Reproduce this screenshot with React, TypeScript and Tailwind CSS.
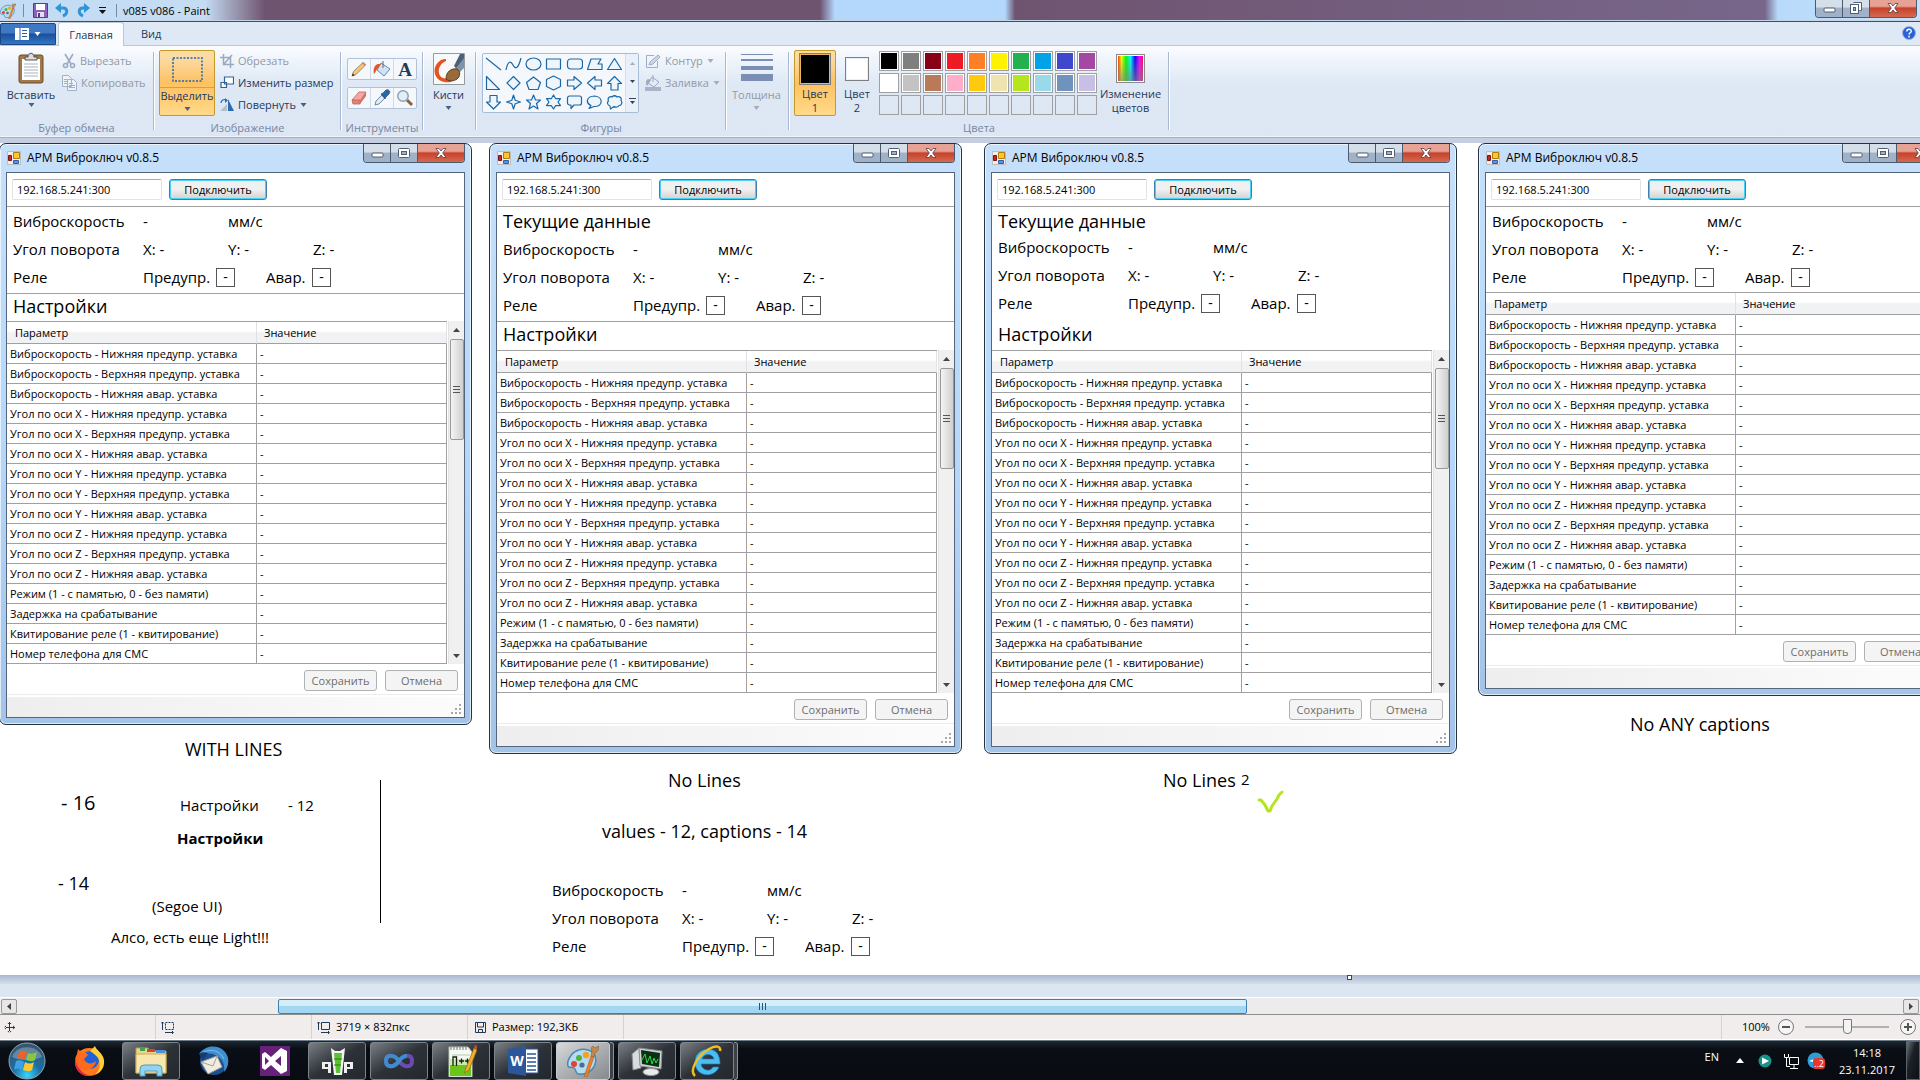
import type { ReactNode } from "react";

const ROWS = [
  "Виброскорость - Нижняя предупр. уставка",
  "Виброскорость - Верхняя предупр. уставка",
  "Виброскорость - Нижняя авар. уставка",
  "Угол по оси X - Нижняя предупр. уставка",
  "Угол по оси X - Верхняя предупр. уставка",
  "Угол по оси X - Нижняя авар. уставка",
  "Угол по оси Y - Нижняя предупр. уставка",
  "Угол по оси Y - Верхняя предупр. уставка",
  "Угол по оси Y - Нижняя авар. уставка",
  "Угол по оси Z - Нижняя предупр. уставка",
  "Угол по оси Z - Верхняя предупр. уставка",
  "Угол по оси Z - Нижняя авар. уставка",
  "Режим (1 - с памятью, 0 - без памяти)",
  "Задержка на срабатывание",
  "Квитирование реле (1 - квитирование)",
  "Номер телефона для СМС",
];

const PALETTE = [
  "bg-[#000000]", "bg-[#7f7f7f]", "bg-[#880015]", "bg-[#ed1c24]", "bg-[#ff7f27]",
  "bg-[#fff200]", "bg-[#22b14c]", "bg-[#00a2e8]", "bg-[#3f48cc]", "bg-[#a349a4]",
  "bg-[#ffffff]", "bg-[#c3c3c3]", "bg-[#b97a57]", "bg-[#ffaec9]", "bg-[#ffc90e]",
  "bg-[#efe4b0]", "bg-[#b5e61d]", "bg-[#99d9ea]", "bg-[#7092be]", "bg-[#c8bfe7]",
];

/* ---------- small drawings ---------- */

function Caret({ className = "text-[#4a5f86]" }: { className?: string }) {
  return (
    <svg width="7" height="4" viewBox="0 0 7 4" className={className}>
      <path d="M0.5 0h6L3.5 4z" fill="currentColor" />
    </svg>
  );
}

function PaletteIcon({ size = 16 }: { size?: number }) {
  return (
    <svg width={size} height={size} viewBox="0 0 32 32">
      <path d="M3 12C6 6 14 3 21 5c7 2 9 8 7 14-2 7-9 11-16 10-3 0-3-3-4-5-1-3-5 0-7-3-1-3 0-6 2-9z" fill="#b5dbf2" stroke="#4d86ad" strokeWidth="1.5" />
      <circle cx="7" cy="19" r="3" fill="#e2403a" />
      <circle cx="12" cy="13" r="3" fill="#52b043" />
      <circle cx="19" cy="10" r="3.2" fill="#f2a31f" />
      <circle cx="15" cy="20" r="2.6" fill="#4a6f8f" />
      <path d="M17 32l7-21 3 1-7 20z" fill="#e8822a" stroke="#b85d15" strokeWidth=".6" />
      <path d="M24 11l1-5c-1-2-1-4 1-5l2 2 4-2c0 4-2 6-4 7l-1 4z" fill="#c08a50" stroke="#8a5c2c" strokeWidth=".6" />
    </svg>
  );
}

function FormIcon() {
  return (
    <svg width="14" height="14" viewBox="0 0 14 14">
      <path d="M.5.5h13v13H.5z" fill="#eee" stroke="#bdbdbd" />
      <path d="M1.5 4.5h3v5h-3z" fill="#c22" stroke="#7d1414" />
      <path d="M6.500 1.500h6v6h-6z" fill="#fbc72d" stroke="#b07d08" />
      <path d="M6.500 9.500h5v3h-5z" fill="#5b93e8" stroke="#2f5fb3" />
    </svg>
  );
}

function CaptionButtons({ restore = false }: { restore?: boolean }) {
  return (
    <div className="flex h-[19px] shrink-0 overflow-hidden rounded-b-[4px] border border-t-0 border-[#4c5a6c]">
      <button aria-label="Свернуть" className="flex w-[27px] items-center justify-center border-r border-[#4c5a6c] bg-linear-to-b from-[#d5dfea] from-45% to-[#9fb2c8] to-50%">
        <svg width="13" height="6" viewBox="0 0 13 6" className="mt-1"><rect x="1" y="1" width="11" height="4" rx="1" fill="#fff" stroke="#555d70" /></svg>
      </button>
      <button aria-label="Развернуть" className="flex w-[27px] items-center justify-center border-r border-[#4c5a6c] bg-linear-to-b from-[#d5dfea] from-45% to-[#9fb2c8] to-50%">
        {restore ? (
          <svg width="12" height="12" viewBox="0 0 12 12" fill="none" stroke="#555d70"><path d="M3.500.5h8v8h-2" fill="#fff" /><rect x=".5" y="2.500" width="8" height="9" fill="#fff" /><rect x="3.500" y="5.500" width="2" height="3" fill="#9fb2c8" /></svg>
        ) : (
          <svg width="12" height="10" viewBox="0 0 12 10" fill="none" stroke="#555d70"><rect x=".5" y=".5" width="11" height="9" rx="1" fill="#fff" /><rect x="3.500" y="3.500" width="5" height="3" fill="#9fb2c8" /></svg>
        )}
      </button>
      <button aria-label="Закрыть" className="flex w-[46px] items-center justify-center bg-linear-to-b from-[#e5a295] from-40% via-[#c8402b] via-50% to-[#d4694f]">
        <svg width="12" height="10" viewBox="0 0 12 10"><path d="M1 .5h3l2 2.500L8 .5h3L7.700 5 11 9.500H8L6 7 4 9.500H1L4.300 5z" fill="#fff" stroke="#5b3a44" strokeWidth=".8" /></svg>
      </button>
    </div>
  );
}

/* ---------- application window drawn on the canvas ---------- */

function Heading({ children, className }: { children: ReactNode; className: string }) {
  return <h2 className={`pl-[6px] text-[18px] leading-[24px] ${className}`}>{children}</h2>;
}

function Flag() {
  return <span className="flex size-[19px] items-center justify-center border border-[#555] text-[14px] leading-none">-</span>;
}

function Readings() {
  return (
    <div className="pl-[6px] text-[15px] leading-[28px]">
      <div className="grid h-7 grid-cols-[130px_85px_85px]"><span>Виброскорость</span><span>-</span><span>мм/с</span></div>
      <div className="grid h-7 grid-cols-[130px_85px_85px]"><span>Угол поворота</span><span>X: -</span><span>Y: -</span><span className="col-start-4">Z: -</span></div>
      <div className="grid h-7 grid-cols-[130px_73px_50px_46px_auto] items-center justify-start"><span>Реле</span><span>Предупр.</span><Flag /><span>Авар.</span><Flag /></div>
    </div>
  );
}

function ScrollColumn() {
  return (
    <div className="ml-px flex w-[16px] flex-col items-center border-l border-[#e3e3e3] bg-[#f0f0f0]">
      <div className="flex h-[18px] items-center"><svg width="7" height="4" viewBox="0 0 7 4"><path d="M0 4h7L3.500 0z" fill="#444" /></svg></div>
      <div className="flex h-[101px] w-[14px] flex-col items-center justify-center gap-[2px] rounded-[2px] border border-[#999] bg-linear-to-r from-[#f4f4f4] to-[#cfcfcf]">
        <i className="h-px w-[7px] bg-[#555]" /><i className="h-px w-[7px] bg-[#555]" /><i className="h-px w-[7px] bg-[#555]" />
      </div>
      <div className="mt-auto flex h-[17px] items-center"><svg width="7" height="4" viewBox="0 0 7 4"><path d="M0 0h7L3.500 4z" fill="#444" /></svg></div>
    </div>
  );
}

function AppWindow({ id, place, variant }: { id: string; place: string; variant: "lines" | "nolines" | "nolines2" | "bare" }) {
  return (
    <section className={`absolute top-0 w-[473px] rounded-[7px] border border-[#28323f] bg-linear-to-b from-[#c6e0fa] via-[#b5d8fb] to-[#a3c3e8] px-[6px] pb-[6px] shadow-[inset_0_0_0_1px_rgba(255,255,255,0.65)] ${place}`}>
      <header className="flex h-[28px] items-start">
        <div className="flex h-[28px] flex-1 items-center gap-[6px] pl-[1px]">
          <FormIcon />
          <span className="text-[12px] leading-4">АРМ Виброключ v0.8.5</span>
        </div>
        <CaptionButtons />
      </header>
      <div className="border border-[#55657a] bg-white">
        <div className="flex h-[34px] items-center gap-[7px] border-b border-[#a0a0a0] pl-[5px]">
          <input aria-label="Адрес" id={`addr-${id}`} defaultValue="192.168.5.241:300" className="h-[21px] w-[150px] rounded-[2px] border border-[#e2e3ea] border-t-[#abadb3] px-[4px] text-[11px]" />
          <button className="h-[21px] w-[98px] rounded-[3px] border border-[#3c7fb1] bg-linear-to-b from-[#f0f0f0] from-50% to-[#d2d2d2] text-[11px] leading-none shadow-[inset_0_0_0_1px_#48d0f7]">Подключить</button>
        </div>
        {variant === "lines" && (
          <>
            <div className="border-b border-[#a0a0a0] pb-[2px]"><Readings /></div>
            <Heading className="h-[27px]">Настройки</Heading>
          </>
        )}
        {variant === "nolines" && (
          <>
            <Heading className="h-[28px] pt-[2px]">Текущие данные</Heading>
            <div className="border-b border-[#a0a0a0] pb-[2px]"><Readings /></div>
            <Heading className="h-[28px]">Настройки</Heading>
          </>
        )}
        {variant === "nolines2" && (
          <>
            <Heading className="h-[26px] pt-[2px]">Текущие данные</Heading>
            <Readings />
            <Heading className="h-[33px] pt-[5px]">Настройки</Heading>
          </>
        )}
        {variant === "bare" && <div className="pb-px"><Readings /></div>}
        <div className="flex">
          <div className="flex-1">
            <table className="w-full table-fixed border-separate border-spacing-0 border-t border-[#a0a0a0] text-left text-[11px] leading-[16px]">
              <thead>
                <tr className="h-[22px] bg-linear-to-b from-white from-40% to-[#f1f2f4] to-50%">
                  <th className="w-[250px] border-r border-b border-r-[#e0e2e5] border-b-[#a0a0a0] p-0 pl-[8px] font-normal">Параметр</th>
                  <th className="border-r border-b border-r-[#e0e2e5] border-b-[#a0a0a0] p-0 pl-[7px] font-normal">Значение</th>
                </tr>
              </thead>
              <tbody>
                {ROWS.map((r) => (
                  <tr key={r} className="h-[20px]">
                    <td className="border-r border-b border-[#a0a0a0] p-0 pl-[3px] whitespace-nowrap">{r}</td>
                    <td className="border-r border-b border-[#a0a0a0] p-0 pl-[3px]">-</td>
                  </tr>
                ))}
              </tbody>
            </table>
          </div>
          {variant !== "bare" && <ScrollColumn />}
        </div>
        <div className="flex justify-end gap-[8px] px-[6px] pt-[6px] pb-[3px]">
          <button disabled className="h-[21px] w-[73px] rounded-[3px] border border-[#adb2b5] bg-[#f4f4f4] text-[11px] leading-none text-[#6d6d6d]">Сохранить</button>
          <button disabled className="h-[21px] w-[73px] rounded-[3px] border border-[#adb2b5] bg-[#f4f4f4] text-[11px] leading-none text-[#6d6d6d]">Отмена</button>
        </div>
        <div className="flex h-[23px] items-end justify-end border-t border-[#ececec] bg-linear-to-r from-[#eeeeee] to-[#fcfcfc] p-[3px] shadow-[inset_0_2px_0_#fff]">
          <svg width="10" height="10" viewBox="0 0 10 10" fill="#a8a8a8"><path d="M8 0h2v2H8zM4 4h2v2H4zM8 4h2v2H8zM0 8h2v2H0zM4 8h2v2H4zM8 8h2v2H8z" /></svg>
        </div>
      </div>
    </section>
  );
}

/* ---------- ribbon ---------- */

function Group({ label, className, children }: { label?: string; className: string; children: ReactNode }) {
  return (
    <div className={`flex h-full shrink-0 items-stretch ${className}`}>
      <div className="flex min-w-0 flex-1 flex-col">
        <div className="flex flex-1 items-start">{children}</div>
        <div className="h-[17px] text-center leading-4 text-[#7886a0]">{label}</div>
      </div>
      <i className="mt-[6px] mb-[7px] w-[2px] border-r border-white bg-[#a9b9d2]" />
    </div>
  );
}

const s = { fill: "#eef5fb", stroke: "#1c68a6", strokeWidth: 1.2, strokeLinejoin: "round" as const };
const SHAPES: [string, ReactNode][] = [
  ["Линия", <path d="M1 2l15 12" {...s} />],
  ["Кривая", <path d="M1 14C3 4 6 5 8 9s5 5 8-7" {...s} fill="none" />],
  ["Овал", <ellipse cx="8.500" cy="8" rx="7.500" ry="6" {...s} />],
  ["Прямоугольник", <path d="M1.500 3h14v10h-14z" {...s} />],
  ["Скругленный прямоугольник", <rect x="1.500" y="3" width="15" height="10" rx="3" {...s} />],
  ["Многоугольник", <path d="M1.500 13.500L5 3h10l-3 5h4v5.500z" {...s} />],
  ["Треугольник", <path d="M8.500 2.500l7 11h-14z" {...s} />],
  ["Прямоугольный треугольник", <path d="M1.500 1.500v13h13z" {...s} />],
  ["Ромб", <path d="M8.500 1.500l6.500 6.500-6.500 6.500L2 8z" {...s} />],
  ["Пятиугольник", <path d="M8.500 2l7 5.500-2.500 7h-9l-2.500-7z" {...s} />],
  ["Шестиугольник", <path d="M8.500 1l7 3.500v7l-7 3.500-7-3.500v-7z" {...s} />],
  ["Стрелка вправо", <path d="M1.500 5H8V1.500L15.500 8 8 14.500V11H1.500z" {...s} />],
  ["Стрелка влево", <path d="M15.500 5H9V1.500L1.500 8 9 14.500V11h6.500z" {...s} />],
  ["Стрелка вверх", <path d="M5 15V8.500H1.500l7-7 7 7H12V15z" {...s} />],
  ["Стрелка вниз", <path d="M5 1.500V8H1.500l7 7 7-7H12V1.500z" {...s} />],
  ["Звезда 4", <path d="M8.500 1l1.700 5.300L15.500 8l-5.300 1.700L8.500 15l-1.700-5.300L1.500 8l5.300-1.700z" {...s} />],
  ["Звезда 5", <path d="M8.500 1l2 5h5l-4 3.500 1.500 5.500-4.500-3-4.500 3 1.500-5.500-4-3.500h5z" {...s} />],
  ["Звезда 6", <path d="M8.500 1l2.200 3.700h4.800L13 8l2.500 3.600h-4.800L8.500 15l-2.200-3.400H1.500L4 8 1.500 4.700h4.800z" {...s} />],
  ["Выноска", <path d="M3.500 2h10a2 2 0 012 2v5a2 2 0 01-2 2H8l-3 3.500V11H3.500a2 2 0 01-2-2V4a2 2 0 012-2z" {...s} />],
  ["Овальная выноска", <path d="M5 11.500L3 14.500l5-2c9 .5 10-9.500.5-10.500C0 2.500-.5 9 5 11.500z" {...s} />],
  ["Облако", <path d="M4 12c-3-1-3-4-1.500-5C1 4 4 2 6 3c2-2 4-1 5 0 3-1 5 1 4 3.500 2 2.500 0 5-2 5-1 2-4 2-5 1L4.500 15z" {...s} />],
];

function ToolButton({ label, children }: { label: string; children: ReactNode }) {
  return (
    <button aria-label={label} className="flex flex-1 items-center justify-center border-r border-[#cfdaea] last:border-r-0">
      <svg width="18" height="18" viewBox="0 0 18 18">{children}</svg>
    </button>
  );
}

function Ribbon() {
  return (
    <div className="flex h-[92px] shrink-0 border-b border-[#a3b1c8] bg-linear-to-b from-[#fafcff] via-[#dfe9f5] via-40% to-[#dce6f4] text-[11px] leading-4 text-[#1e395b] shadow-[inset_0_-1px_0_#eef4fb]">
      <Group label="Буфер обмена" className="w-[155px]">
        <button className="flex w-[62px] flex-col items-center pt-[6px]">
          <svg width="26" height="32" viewBox="0 0 26 32">
            <rect x="1" y="3" width="24" height="28" rx="2" fill="#a3794b" stroke="#6e4b26" />
            <path d="M4 7h18v21H4z" fill="#fff" />
            <path d="M6 12h14M6 15h14M6 18h14M6 21h14M6 24h14" stroke="#a9b3bd" />
            <path d="M7 8V5h3c0-5 6-5 6 0h3v3z" fill="#d9dcdf" stroke="#555" />
          </svg>
          <span className="mt-[3px]">Вставить</span>
          <Caret />
        </button>
        <div className="flex flex-col pt-[4px] text-[#9299a6]">
          <button disabled className="flex h-[22px] items-center gap-[4px]">
            <svg width="14" height="16" viewBox="0 0 14 16" fill="none" stroke="#9aaac4" strokeWidth="1.600"><path d="M3 1l6 10M11 1L5 11" /><circle cx="3.500" cy="12.500" r="2" /><circle cx="10.500" cy="12.500" r="2" /></svg>
            Вырезать
          </button>
          <button disabled className="flex h-[22px] items-center gap-[4px]">
            <svg width="15" height="16" viewBox="0 0 15 16" fill="#eef3f9" stroke="#a3b1c8"><path d="M.5.5h6l3 3v8h-9zM5.500 4.500h6l3 3v8h-9z" /><path d="M7 8.500h4M7 10.500h6M7 12.500h6M2 4.500h3M2 6.500h3M2 8.500h3" /></svg>
            Копировать
          </button>
        </div>
      </Group>

      <Group label="Изображение" className="w-[187px]">
        <button className="mt-[4px] ml-[4px] flex h-[66px] w-[56px] shrink-0 flex-col items-center rounded-[2px] border border-[#c29b29] bg-linear-to-b from-[#fbdba4] from-10% via-[#fdc160] via-50% to-[#ffd98a]">
          <span className="flex h-[37px] w-full items-center justify-center border-b border-[#d1a23d]">
            <svg width="31" height="25" viewBox="0 0 31 25"><path d="M1 1h29v23H1z" fill="none" stroke="#2464a6" strokeWidth="1.500" strokeDasharray="2 1.500" /></svg>
          </span>
          <span>Выделить</span>
          <span className="flex h-[10px] items-center"><Caret /></span>
        </button>
        <div className="flex flex-col pt-[4px] pl-[5px]">
          <button disabled className="flex h-[22px] items-center gap-[4px] text-[#9299a6]">
            <svg width="14" height="14" viewBox="0 0 14 14" fill="none" stroke="#9aa9c0" strokeWidth="1.500"><path d="M3.500 0v10.500H14M0 3.500h10.500V14M4 10l8-9" /></svg>
            Обрезать
          </button>
          <button className="flex h-[22px] items-center gap-[4px] whitespace-nowrap">
            <svg width="14" height="14" viewBox="0 0 14 14" fill="#fff" stroke="#2c6496" strokeWidth="1.200"><path d="M4.500 1h9v7h-9zM1 6.500h5.500v5H1z" /></svg>
            Изменить размер
          </button>
          <button className="flex h-[22px] items-center gap-[4px]">
            <svg width="14" height="14" viewBox="0 0 14 14"><path d="M0 13L7 6v7z" fill="#b6bec9" /><path d="M8 13V1l6 12z" fill="#2a6eaf" /><path d="M1 5c0-3 3-4 5-3" fill="none" stroke="#2a6eaf" strokeWidth="1.300" /><path d="M5 0l3 2.500L5 5z" fill="#2a6eaf" /></svg>
            Повернуть <Caret />
          </button>
        </div>
      </Group>

      <Group label="Инструменты" className="w-[82px]">
        <div className="flex flex-1 flex-col gap-[7px] px-[5px] pt-[12px]">
          <div className="flex h-[22px] rounded-[2px] border border-[#b2c2da] bg-[#f4f8fd]">
            <ToolButton label="Карандаш"><path d="M2 16l1.500-4.500L13 2.500 15.500 5 6 14.500z" fill="#f4c876" stroke="#7a6242" strokeWidth=".7" /><path d="M12 3.500l1.500-1.500 2.500 2.500-1.500 1.500z" fill="#e0807a" /><path d="M2 16l.8-2.500 1.700 1.700z" fill="#222" /></ToolButton>
            <ToolButton label="Заливка"><path d="M8 3l9 6-6 7-7-6z" fill="#cfe3f2" stroke="#4a7fa9" strokeWidth=".9" /><path d="M5 4C1 5 0 10 1 14c2-2 2-4 4-6l3-4z" fill="#e2562c" /><path d="M10 8V1" stroke="#666" /></ToolButton>
            <ToolButton label="Текст"><text x="9" y="16" textAnchor="middle" fontFamily="Liberation Serif, serif" fontWeight="700" fontSize="19" fill="#1f3b57">A</text></ToolButton>
          </div>
          <div className="flex h-[22px] rounded-[2px] border border-[#b2c2da] bg-[#f4f8fd]">
            <ToolButton label="Ластик"><path d="M2 11L9 3h7l-6 9z" fill="#f3a9a2" stroke="#c0635c" strokeWidth=".8" /><path d="M2 11h8v4H3z" fill="#e68078" stroke="#c0635c" strokeWidth=".8" /><path d="M10 12l6-9v4l-6 8z" fill="#d66e66" /></ToolButton>
            <ToolButton label="Палитра"><path d="M2 16l1-4 6-6 3 3-6 6z" fill="#dcebf7" stroke="#56718c" strokeWidth=".8" /><path d="M8 5l2-1 3-3c3-1 5 2 3 4l-3 3-1 2z" fill="#2768a8" stroke="#173f6b" strokeWidth=".6" /></ToolButton>
            <ToolButton label="Масштаб"><path d="M11 11l5 5" stroke="#8a6440" strokeWidth="3" /><circle cx="7" cy="7" r="5.200" fill="#dff0fa" stroke="#8fa0b0" strokeWidth="1.500" /></ToolButton>
          </div>
        </div>
      </Group>

      <Group className="w-[53px]">
        <button className="flex flex-1 flex-col items-center pt-[7px] pr-[2px]">
          <svg width="32" height="32" viewBox="0 0 32 32">
            <path d="M.5.5h31v31H.5z" fill="#f7f9fa" stroke="#9a9a9a" />
            <path d="M13 6C5 6 0 14 2 21c2 7 9 9 16 8l2-5c-6 3-13 2-14-4-1-5 2-10 7-12z" fill="#e4531f" />
            <path d="M22 14L31 3v12l-5 5z" fill="#7d93a9" /><path d="M27 1l4 0v4l-8 10-2-2z" fill="#4b5f78" /><path d="M13 26c0-7 5-11 11-10 4 2 3 8 0 10s-7 3-11 0z" fill="#9a6b3a" stroke="#5c3c1b" />
          </svg>
          <span className="mt-[2px]">Кисти</span>
          <span className="flex h-[10px] items-center"><Caret /></span>
        </button>
      </Group>

      <Group label="Фигуры" className="w-[250px]">
        <div className="mt-[7px] ml-[5px] flex h-[60px] w-[157px] shrink-0 rounded-[2px] border border-[#a9bcd6] bg-[#f4f8fd]">
          <div className="grid w-[142px] grid-cols-7 grid-rows-3 place-items-center">
            {SHAPES.map(([n, d]) => (
              <button key={n} aria-label={n}><svg width="17" height="16" viewBox="0 0 17 16">{d}</svg></button>
            ))}
          </div>
          <div className="flex flex-1 flex-col items-center justify-around border-l border-[#d5dfec] bg-[#e9f0f9]">
            <svg width="5" height="3" viewBox="0 0 5 3"><path d="M0 3h5L2.500 0z" fill="#a5adba" /></svg>
            <svg width="5" height="3" viewBox="0 0 5 3"><path d="M0 0h5L2.500 3z" fill="#33435c" /></svg>
            <svg width="7" height="6" viewBox="0 0 7 6"><path d="M0 0h7v1H0zM1 3h5L3.500 6z" fill="#33435c" /></svg>
          </div>
        </div>
        <div className="flex flex-col pt-[4px] pl-[6px] text-[#9299a6]">
          <button disabled className="flex h-[22px] items-center gap-[4px]">
            <svg width="16" height="15" viewBox="0 0 16 15" fill="none" stroke="#a0aec5"><path d="M9 1.500H1.500v12h11V7" /><path d="M4 11l1-3 8-7 2 2-7 7z" fill="#ccd6e5" /></svg>
            Контур <Caret className="text-[#a3adbe]" />
          </button>
          <button disabled className="flex h-[22px] items-center gap-[4px]">
            <svg width="16" height="16" viewBox="0 0 16 16"><path d="M0 12h16v4H0z" fill="#a7b4ca" /><path d="M7 2l7 5-5 5-6-4z" fill="#e4ebf4" stroke="#9aa9c0" /><path d="M3 4C0 6 1 9 2 11l4-6z" fill="#9aa9c0" /><path d="M8 7V0" stroke="#9aa9c0" /></svg>
            Заливка <Caret className="text-[#a3adbe]" />
          </button>
        </div>
      </Group>

      <Group className="w-[63px]">
        <button disabled className="flex flex-1 flex-col items-center pt-[8px] pr-[2px] text-[#9299a6]">
          <svg width="32" height="28" viewBox="0 0 32 28" fill="#7a8fb3"><path d="M0 0h32v1H0zM0 5h32v2H0zM0 12h32v4H0zM0 20h32v7H0z" /></svg>
          <span className="mt-[5px]">Толщина</span>
          <span className="flex h-[10px] items-center"><Caret className="text-[#a3adbe]" /></span>
        </button>
      </Group>

      <Group label="Цвета" className="w-[380px]">
        <button className="mt-[4px] ml-[4px] flex h-[66px] w-[42px] shrink-0 flex-col items-center rounded-[2px] border border-[#c29b29] bg-linear-to-b from-[#fbdba4] from-10% via-[#fdc160] via-50% to-[#ffd98a] pt-[2px]">
          <i className="size-[32px] shrink-0 border border-[#7f7f7f] bg-black shadow-[inset_0_0_0_1px_#e8b860]" />
          <span className="mt-[2px] leading-[14px]">Цвет<br />1</span>
        </button>
        <button className="mt-[11px] ml-[1px] flex w-[40px] shrink-0 flex-col items-center">
          <i className="size-[24px] border border-[#7f7f7f] bg-white shadow-[inset_0_0_0_1px_#e8f0f8]" />
          <span className="mt-[6px] leading-[14px]">Цвет<br />2</span>
        </button>
        <div className="mt-[5px] ml-[2px] grid shrink-0 grid-cols-10 gap-[2px]">
          {PALETTE.map((c) => (
            <button key={c} aria-label="Цвет палитры" className={`size-[20px] border border-[#a0a0a0] shadow-[inset_0_0_0_1px_#fff] ${c}`} />
          ))}
          {Array.from({ length: 10 }, (_, i) => (
            <button key={i} aria-label="Пустая ячейка" className="size-[20px] border border-[#a0a0a0]" />
          ))}
        </div>
        <button className="mt-[8px] flex flex-1 flex-col items-center pr-[4px]">
          <i className="size-[29px] border border-[#8a8a8a] bg-[linear-gradient(to_bottom,transparent,rgba(128,128,128,0.7)),linear-gradient(to_right,#f00,#ff0,#0f0,#0ff,#00f,#f0f,#f04)] shadow-[inset_0_0_0_1px_#fff]" />
          <span className="mt-[4px] leading-[14px]">Изменение<br />цветов</span>
        </button>
      </Group>
    </div>
  );
}

/* ---------- task bar ---------- */

function Task({ label, open, active, stacked, children }: { label: string; open?: boolean; active?: boolean; stacked?: boolean; children: ReactNode }) {
  const icon = <svg width="32" height="32" viewBox="0 0 32 32">{children}</svg>;
  const look = active
    ? "border border-[#c6cbd0] bg-linear-to-br from-[#d7d9da] to-[#84898d]"
    : open
      ? "border border-[#7d8488] bg-linear-to-br from-[#7b8186] via-[#2c3237] via-50% to-[#22282d]"
      : "";
  return (
    <div className="flex h-[38px] w-[58px]">
      <button aria-label={label} className={`flex h-full flex-1 items-center justify-center rounded-[3px] ${look}`}>{icon}</button>
      {stacked && <i className="h-full w-[4px] rounded-r-[3px] border border-l-0 border-[#8b9297] bg-[#3b4146]" />}
    </div>
  );
}

function Taskbar() {
  return (
    <nav className="flex h-[40px] shrink-0 items-center border-t border-[#6d7c88] bg-linear-to-b from-[#1c2831] via-[#0a0f15] via-20% to-[#080b11] text-white">
      <button aria-label="Пуск" className="flex w-[60px] justify-center pr-[6px]">
        <svg width="38" height="38" viewBox="0 0 38 38">
          <defs>
            <radialGradient id="orb" cx="50%" cy="90%" r="85%"><stop offset="0" stopColor="#38d6fb" /><stop offset=".45" stopColor="#1b6fa5" /><stop offset="1" stopColor="#37566f" /></radialGradient>
          </defs>
          <circle cx="19" cy="19" r="18" fill="url(#orb)" stroke="#8aa7bb" />
          <path d="M4 15C8 2 30 2 34 15c-8 4-22 4-30 0z" fill="#fff" opacity=".25" />
          <path d="M11 10c3-2 5-1 8 0l-2 8c-3-2-5-2-8-1z" fill="#f0602a" />
          <path d="M20 11c3 1 5 1 9-1l-2 8c-3 2-6 1-9 0z" fill="#8cc63e" />
          <path d="M8 19c3-1 5-1 8 1l-2 8c-3-2-5-2-8 0z" fill="#3fa2e4" />
          <path d="M17 20c3 2 6 2 9 0l-2 8c-3 2-6 1-9 0z" fill="#fdc82f" />
        </svg>
      </button>
      <div className="flex flex-1 gap-[4px]">
        <Task label="Firefox">
          <circle cx="16" cy="17" r="14" fill="#ff7a1a" /><path d="M3 11C-1 25 9 32 18 31 8 29 3 21 3 11z" fill="#e6254c" /><circle cx="17" cy="15" r="9" fill="#2060d8" />
          <path d="M4 9l1-5 4 4c3-1 5 0 6 2l-4 4c2 5 8 6 12 2-1 8-11 12-17 7-3-3-4-9-2-14z" fill="#ff6a1c" />
          <path d="M17 6L22 1c1 4 8 7 9 14 1 8-4 13-9 15 5-5 6-12 3-17-2-3-5-5-8-7z" fill="#ffd033" />
        </Task>
        <Task label="Проводник" open>
          <path d="M1 3h12l1 3h17v22H1z" fill="#ecd48a" stroke="#b99b45" /><path d="M5 2h5v4H5z" fill="#3aa455" /><path d="M12 4h8v3h-8z" fill="#d8432f" /><path d="M21 5h9v3h-9z" fill="#4f8fd6" />
          <path d="M1 9h30v19H1z" fill="#f8e7ac" stroke="#c9ac5b" /><path d="M5 31V24q0-4 4-4h14q4 0 4 4v7h-5v-5H10v5z" fill="#94d3ef" stroke="#4d9cc2" />
        </Task>
        <Task label="Thunderbird">
          <circle cx="17" cy="16" r="14" fill="#1b4f94" /><path d="M2 9C8 0 21-1 28 7c5 6 4 15-1 20C29 14 19 6 2 9z" fill="#3f8fd0" /><path d="M5 8c8-5 18-3 22 6" fill="none" stroke="#7fc0ea" /><path d="M2 9c3-2 6-2 9-1l-5 7z" fill="#153c6f" />
          <path d="M4 17l16-6 5 11-14 7z" fill="#f1ece2" stroke="#a79f8f" /><path d="M4 17l12 4 4-10" fill="none" stroke="#a79f8f" />
        </Task>
        <Task label="Visual Studio">
          <path d="M1 1h30v30H1z" fill="#68217a" /><path d="M22 3l6 3v20l-6 3-10-9-6 5-3-2V9l3-2 6 5zM22 11l-6 5 6 5zM6 12v8l4-4z" fill="#fff" fillRule="evenodd" />
        </Task>
        <Task label="QIP" open>
          <path d="M10 3l4 3h5l5-3-3 27h-8z" fill="#f5f5f5" /><path d="M13 8h8l-2 20h-4z" fill="#5bc233" /><path d="M13 14h8M13 20h7" stroke="#2b7c14" /><path d="M1 17h9v11H7v-4H1zM4 19v3h3v-3zM23 17h9v7h-6v4h-3zM26 19v3h3v-3z" fill="#efefef" fillRule="evenodd" />
        </Task>
        <Task label="Blend" open>
          <path d="M16 16C11 9 3 9 3 16s8 7 13 0 13-7 13 0-8 7-13 0z" fill="none" stroke="#6a4bb0" strokeWidth="4" /><path d="M16 16C11 9 3 9 3 16s8 7 13 0c2-3 5-5 8-5" fill="none" stroke="#3f8ccc" strokeWidth="4" />
        </Task>
        <Task label="Notepad++" open>
          <path d="M4 2h19l4 5v25H4z" fill="#f6faf4" stroke="#b8c2b0" /><path d="M5 20h21v11H5z" fill="#6ac51a" /><path d="M5 14h21v6H5z" fill="#cdeab0" /><path d="M6 2v3M9 2v3M12 2v3M15 2v3M18 2v3M21 2v3" stroke="#777" /><path d="M7 10h18" stroke="#b7cbb0" />
          <path d="M8 21v-9h3.500v9M14 16h5M16.500 13.500v5M20 16h5M22.500 13.500v5" fill="none" stroke="#14210f" strokeWidth="1.300" /><path d="M19 28l2-5L29 3l3 2-8 20z" fill="#f0b02c" stroke="#946513" strokeWidth=".7" /><path d="M29 3l1-3 3 1-1 4z" fill="#c64747" />
        </Task>
        <Task label="Word" open>
          <path d="M15 4h16v24H15z" fill="#fff" stroke="#2b579a" /><path d="M20 9h9M20 13h9M20 17h9M20 21h9M20 25h9" stroke="#2b579a" strokeWidth="1.500" /><path d="M1 4l18-3v30L1 28z" fill="#2b579a" />
          <text x="10" y="21" textAnchor="middle" fontFamily="Open Sans, sans-serif" fontWeight="700" fontSize="14" fill="#fff">W</text>
        </Task>
        <Task label="Paint" active stacked><PaletteIcon size={32} /></Task>
        <Task label="Монитор" open>
          <path d="M1 9l7-6 2 20-8 2z" fill="#d9dcdc" stroke="#888" /><path d="M8 3l23 3-1 18-21-3z" fill="#d0d4d4" stroke="#8b8f8f" /><path d="M10 5l19 3-1 14-17-3z" fill="#0b2e17" />
          <path d="M11 15l3-6 2 9 3-7 2 8 2-6 2 5 2-4" fill="none" stroke="#2fdc46" /><ellipse cx="20" cy="27" rx="8" ry="3.500" fill="#e9eaea" stroke="#999" />
        </Task>
        <Task label="Internet Explorer" open stacked>
          <path d="M29 19H10c1 7 10 8 12 3h6C23 34 4 32 4 17S25 0 28 12c1 3 1 5 1 7zM11 14h12c-1-6-11-6-12 0z" fill="#4bbdf0" stroke="#1d7fc0" strokeWidth=".7" fillRule="evenodd" />
          <path d="M4 31C-2 26 6 11 18 4c7-4 12-3 11 2" fill="none" stroke="#f3bf1f" strokeWidth="2.500" />
        </Task>
      </div>
      <div className="flex h-full items-center">
        <span className="mr-[17px] mb-[6px] text-[11px]">EN</span>
        <svg width="8" height="5" viewBox="0 0 8 5" className="mr-[14px]"><path d="M0 5h8L4 0z" fill="#fff" /></svg>
        <svg width="14" height="14" viewBox="0 0 14 14" className="mr-[11px]"><circle cx="7" cy="7" r="6.500" fill="#17928a" /><path d="M4 3.500L11 7l-7 3.500z" fill="#fff" /></svg>
        <svg width="16" height="16" viewBox="0 0 16 16" fill="none" stroke="#fff" className="mr-[8px]"><path d="M6.500 4.500h9v7h-9zM11 12v3M7 15.500h8M1.500 1v3.500h4V1M3.500 5v8.500H7" /></svg>
        <svg width="18" height="18" viewBox="0 0 18 18" className="mr-[13px]"><circle cx="8.500" cy="8.500" r="8" fill="#2c9fd8" /><path d="M2 9l5-2-1 3z" fill="#fff" /><rect x="6" y="6" width="12" height="11" rx="3" fill="#e8372c" /><text x="12" y="15" textAnchor="middle" fontFamily="Open Sans, sans-serif" fontSize="9" fill="#fff">..2</text></svg>
        <time className="w-[58px] text-center text-[11px] leading-[17px]">14:18<br />23.11.2017</time>
        <button aria-label="Показать рабочий стол" className="ml-[10px] h-full w-[14px] border border-[#59636b] bg-linear-to-br from-[#6d757b] via-[#1b2127] via-40% to-[#0d1116]" />
      </div>
    </nav>
  );
}

/* ---------- page ---------- */

function Note({ place, children }: { place: string; children: ReactNode }) {
  return <p className={`absolute leading-[20px] whitespace-nowrap ${place}`}>{children}</p>;
}

function ZoomButton({ label, d }: { label: string; d: string }) {
  return (
    <button aria-label={label}>
      <svg width="16" height="16" viewBox="0 0 16 16"><circle cx="8" cy="8" r="7.500" fill="#f6f6f6" stroke="#777" /><path d={d} stroke="#555" strokeWidth="2" /></svg>
    </button>
  );
}

export default function App() {
  return (
    <div className="flex min-h-screen flex-col overflow-hidden bg-[#dce6f2] font-['Open_Sans','Noto_Sans',sans-serif] text-black">
      <header className="flex h-[22px] shrink-0 items-start border-b border-[#474b60] bg-[linear-gradient(to_right,#c3dcf6_0px,#c5dcf2_205px,#6f5470_265px,#6f5470_820px,#b3d8fc_835px,#b3d8fc_1005px,#6f5470_1015px,#77668a_1765px,#b8dafa_1778px,#c6e0fa_100%)] text-[11px] leading-4 shadow-[inset_0_-1px_0_#c5d4e6]">
        <div className="flex h-[21px] flex-1 items-center">
          <PaletteIcon />
          <i className="mr-[9px] ml-[7px] h-[13px] w-px bg-[#7d8a99]" />
          <svg width="15" height="15" viewBox="0 0 15 15"><path d="M.5.5h14v14H.5z" fill="#8c62b8" stroke="#5b3a86" /><path d="M3 1h9v6H3z" fill="#fff" /><path d="M4 9h7v5H4z" fill="#e5e0ee" /><path d="M5 10h2v4H5z" fill="#5b3a86" /></svg>
          <svg width="15" height="15" viewBox="0 0 15 15" className="ml-[7px]"><path d="M4 5h4c5 0 5 6 0 8" fill="none" stroke="#2f95d8" strokeWidth="3" /><path d="M6 0v10L0 5z" fill="#2f95d8" /></svg>
          <svg width="15" height="15" viewBox="0 0 15 15" className="ml-[6px]"><path d="M10 5H7c-5 0-5 6 0 8" fill="none" stroke="#2f95d8" strokeWidth="3" /><path d="M8 0v10l6-5z" fill="#2f95d8" /></svg>
          <svg width="7" height="7" viewBox="0 0 7 7" className="ml-[8px]"><path d="M0 0h7v1H0zM0 3h7L3.500 7z" fill="#111" /></svg>
          <i className="mr-[6px] ml-[10px] h-[13px] w-px bg-[#7d8a99]" />
          <h1>v085 v086 - Paint</h1>
        </div>
        <div className="mr-[3px] -mt-px"><CaptionButtons restore /></div>
      </header>

      <div className="flex h-[24px] shrink-0 items-end border-b border-[#b9c9dc] bg-[#dfe9f5] text-[11px] leading-4 text-[#1e395b]">
        <button aria-label="Меню Paint" className="flex h-[22px] w-[56px] items-center justify-center gap-[5px] rounded-t-[2px] border border-[#1c4583] bg-linear-to-b from-[#3f79c4] from-45% via-[#1c4e9c] via-50% to-[#2f78c4]">
          <svg width="14" height="12" viewBox="0 0 14 12"><path d="M0 0h14v12H0z" fill="#fff" /><path d="M5 0v12M7 2.500h5M7 5.500h5M7 8.500h5" stroke="#2c5ea5" /></svg>
          <Caret className="text-white" />
        </button>
        <button className="-mb-px ml-[2px] h-[24px] w-[66px] rounded-t-[3px] border border-b-0 border-[#b9c9dc] bg-[#fafcff]">Главная</button>
        <button className="ml-[17px] h-[22px]">Вид</button>
        <button aria-label="Справка" className="mr-[4px] mb-[5px] ml-auto">
          <svg width="14" height="14" viewBox="0 0 14 14"><circle cx="7" cy="7" r="6.500" fill="#2a62d4" stroke="#9bb4dd" /><path d="M4.800 5.500c0-3 4.500-2.800 4.500-.3 0 1.600-2.200 1.500-2.200 3.300M7 9.800v1.700" fill="none" stroke="#fff" strokeWidth="1.500" /></svg>
        </button>
      </div>

      <Ribbon />

      <main className="flex flex-1 flex-col border-t-[5px] border-[#c6cfe1]">
        <div className="relative h-[832px] shrink-0 overflow-hidden bg-white">
          <AppWindow id="1" variant="lines" place="left-[-1px]" />
          <AppWindow id="2" variant="nolines" place="left-[489px]" />
          <AppWindow id="3" variant="nolines2" place="left-[984px]" />
          <AppWindow id="4" variant="bare" place="left-[1478px]" />

          <Note place="left-[185px] top-[596px] text-[18px]">WITH LINES</Note>
          <Note place="left-[61px] top-[650px] text-[20px]">- 16</Note>
          <Note place="left-[180px] top-[652px] text-[15px]">Настройки</Note>
          <Note place="left-[288px] top-[652px] text-[15px]">- 12</Note>
          <Note place="left-[177px] top-[685px] text-[15px] font-bold">Настройки</Note>
          <Note place="left-[58px] top-[730px] text-[18px]">- 14</Note>
          <Note place="left-[152px] top-[753px] text-[15px]">(Segoe UI)</Note>
          <Note place="left-[111px] top-[784px] text-[15px]">Алсо, есть еще Light!!!</Note>
          <i className="absolute top-[637px] left-[380px] h-[143px] w-px bg-black" />

          <Note place="left-[668px] top-[627px] text-[18px]">No Lines</Note>
          <Note place="left-[602px] top-[678px] text-[18px]">values - 12, captions - 14</Note>
          <div className="absolute top-[733px] left-[546px]"><Readings /></div>

          <Note place="left-[1163px] top-[627px] text-[18px]">No Lines</Note>
          <Note place="left-[1241px] top-[626px] text-[15px]">2</Note>
          <svg width="30" height="28" viewBox="0 0 30 28" className="absolute top-[643px] left-[1256px]"><path d="M3 14h2l4 5 3 6h2l2-5 5-7 2-4 3-3" fill="none" stroke="#b5e61d" strokeWidth="3" strokeLinecap="round" strokeLinejoin="round" /></svg>

          <Note place="left-[1630px] top-[571px] text-[18px]">No ANY captions</Note>
        </div>
        <div className="relative h-[9px] shrink-0 bg-linear-to-b from-[#a9b6cd] to-[#d5deeb]">
          <i className="absolute top-0 left-[1347px] size-[5px] border border-[#444] bg-white" />
        </div>
      </main>

      <div className="flex h-[18px] shrink-0 items-center border-t border-b border-t-white border-b-[#8f8f8f] bg-[#ececec] px-px">
        <button aria-label="Прокрутить влево" className="flex h-[15px] w-[16px] items-center justify-center rounded-[2px] border border-[#999] bg-[#e6e6e6]"><svg width="4" height="7" viewBox="0 0 4 7"><path d="M4 0v7L0 3.500z" fill="#444" /></svg></button>
        <div className="flex-1 pr-[34.2%] pl-[13.6%]">
          <div className="flex h-[15px] items-center justify-center gap-[2px] rounded-[2px] border border-[#3c7fb1] bg-linear-to-b from-[#d6edfa] from-45% to-[#a2d7f3] to-50%">
            <i className="h-[7px] w-px bg-[#1d5480]" /><i className="h-[7px] w-px bg-[#1d5480]" /><i className="h-[7px] w-px bg-[#1d5480]" />
          </div>
        </div>
        <button aria-label="Прокрутить вправо" className="flex h-[15px] w-[16px] items-center justify-center rounded-[2px] border border-[#999] bg-[#e6e6e6]"><svg width="4" height="7" viewBox="0 0 4 7"><path d="M0 0v7l4-3.500z" fill="#444" /></svg></button>
      </div>

      <footer className="flex h-[25px] shrink-0 items-center border-b border-[#fff] bg-[#f0edec] text-[11px] leading-4">
        <div className="flex h-full w-[156px] items-center border-r border-[#d5d2d1] pl-[4px]">
          <svg width="11" height="11" viewBox="0 0 11 11"><path d="M5 0h1v11H5zM0 5h11v1H0zM3.500 2l2-2 2 2zM3.500 9l2 2 2-2zM2 3.500l-2 2 2 2zM9 3.500l2 2-2 2z" fill="#1e395b" /></svg>
        </div>
        <div className="flex h-full w-[156px] items-center border-r border-[#d5d2d1] pl-[5px]">
          <svg width="14" height="13" viewBox="0 0 14 13" fill="none" stroke="#1e395b"><path d="M4.500 1.500h8v7h-8z" strokeDasharray="2 1" /><path d="M1.500 1v8M0 2.500L1.500 1 3 2.500M4 11.500h8M11 10l1.500 1.500L11 13" /></svg>
        </div>
        <div className="flex h-full w-[156px] items-center gap-[5px] border-r border-[#d5d2d1] pl-[5px]">
          <svg width="14" height="13" viewBox="0 0 14 13" fill="none" stroke="#1e395b"><path d="M4.500 1.500h8v7h-8z" /><path d="M1.500 1v8M0 2.500L1.500 1 3 2.500M4 11.500h8M11 10l1.500 1.500L11 13" /></svg>
          3719 × 832пкс
        </div>
        <div className="flex h-full w-[156px] items-center gap-[6px] border-r border-[#d5d2d1] pl-[7px]">
          <svg width="11" height="11" viewBox="0 0 11 11" fill="none" stroke="#1e395b"><path d="M.5.5h10v10H.5zM2.500 1v4h6V1M3.500 10V7.500h4V10" /></svg>
          Размер: 192,3КБ
        </div>
        <div className="ml-auto flex h-full items-center border-l border-[#d5d2d1] pr-[4px] pl-[20px]">
          <label htmlFor="zoom" className="w-[36px]">100%</label>
          <ZoomButton label="Уменьшить" d="M4 8h8" />
          <input
            id="zoom"
            type="range"
            defaultValue={50}
            className="mx-[11px] h-[16px] w-[84px] appearance-none bg-transparent [&::-webkit-slider-runnable-track]:h-[2px] [&::-webkit-slider-runnable-track]:bg-[#b0b0b0] [&::-webkit-slider-thumb]:-mt-[7px] [&::-webkit-slider-thumb]:h-[15px] [&::-webkit-slider-thumb]:w-[9px] [&::-webkit-slider-thumb]:appearance-none [&::-webkit-slider-thumb]:rounded-b-[4px] [&::-webkit-slider-thumb]:border [&::-webkit-slider-thumb]:border-[#777] [&::-webkit-slider-thumb]:bg-[#f4f4f4]"
          />
          <ZoomButton label="Увеличить" d="M4 8h8M8 4v8" />
        </div>
      </footer>

      <Taskbar />
    </div>
  );
}
